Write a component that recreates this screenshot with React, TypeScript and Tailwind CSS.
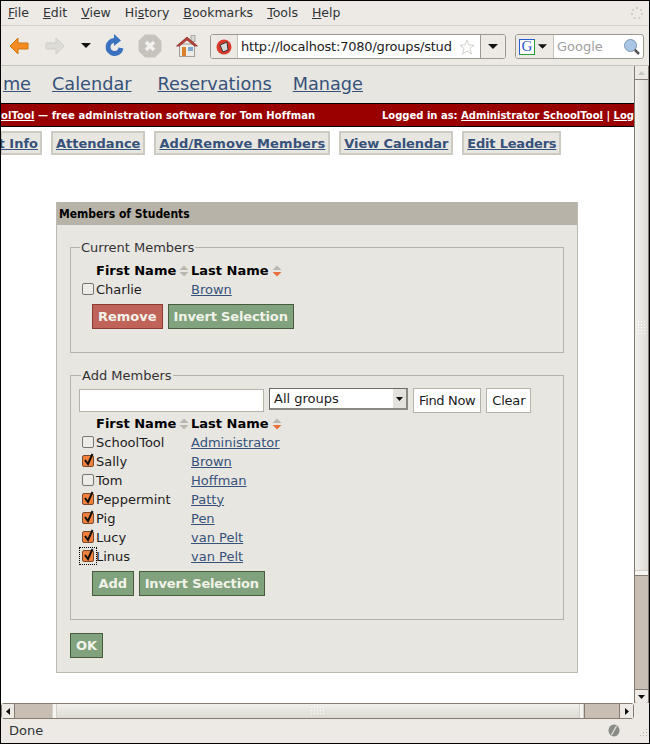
import React from "react";

function Sort({ active }: { active?: boolean }) {
  return (
    <svg width="10" height="12" viewBox="0 0 10 12" className="shrink-0">
      <path d="M5 0.5 L9.5 5 H0.5 Z" fill="#bab8ae" />
      <path d="M0.5 7 H9.5 L5 11.5 Z" fill={active ? "#e8703a" : "#bab8ae"} />
    </svg>
  );
}

function Check({ on, focus }: { on?: boolean; focus?: boolean }) {
  return (
    <span className={`relative block w-[12px] h-[12px] mt-[-1px] shrink-0 rounded-[2px] border ${on ? "border-[#7a4a2a] bg-[#f0803c]" : "border-[#77756e] bg-[#eeece8]"}`}>
      {on && (
        <svg width="13" height="15" viewBox="0 0 13 15" className="absolute left-[-1px] top-[-4px]">
          <path d="M3 8 L6 12 L10.5 2" fill="none" stroke="#111" strokeWidth="2" />
        </svg>
      )}
      {focus && <span className="absolute left-[-4px] top-[-4px] w-[18px] h-[18px] border border-dotted border-black" />}
    </span>
  );
}

function Row({ first, last, on, focus }: { first: string; last: string; on?: boolean; focus?: boolean }) {
  return (
    <div className="flex items-center h-[19px] text-[13px] text-[#1c1c1c]">
      <div className="w-[17px] pl-[3px]"><Check on={on} focus={focus} /></div>
      <div className="w-[95px]">{first}</div>
      <a className="underline text-[#36527a]">{last}</a>
    </div>
  );
}

function Head({ active }: { active?: boolean }) {
  return (
    <div className="flex items-center h-[19px] pl-[17px] text-[13px] font-bold text-black">
      <div className="w-[95px] flex items-center gap-[3px]">First Name <Sort /></div>
      <div className="flex items-center gap-[3px]">Last Name <Sort active={active} /></div>
    </div>
  );
}

function Btn({ children, red, cls }: { children: React.ReactNode; red?: boolean; cls?: string }) {
  return (
    <button className={`h-[25px] border text-[13px] font-bold text-[#f2f2ea] ${cls ?? "px-[5px]"} ${red ? "bg-[#c0645a] border-[#8c3b30]" : "bg-[#80a27c] border-[#465c3c]"}`}>
      {children}
    </button>
  );
}

function Tab({ children, cls }: { children: React.ReactNode; cls: string }) {
  return (
    <div className={`h-[24px] shrink-0 flex items-center pt-[1px] border-2 border-[#cccac1] bg-[#e8e6e1] text-[13px] font-bold text-[#36527a] ${cls}`}>
      <span className="underline">{children}</span>
    </div>
  );
}

function Menu({ u, rest, pre }: { u: string; rest: string; pre?: string }) {
  return <span>{pre}<span className="underline">{u}</span>{rest}</span>;
}

export default function App() {
  return (
    <div className="font-['DejaVu_Sans',sans-serif] w-[650px] h-[744px] overflow-hidden flex flex-col border border-black bg-[#edeae5] text-[#2e2e2e]">
      {/* menu bar */}
      <div className="h-[25px] shrink-0 flex items-center justify-between border-b border-[#d2cfc8] pl-[7px] pr-[5px]">
        <div className="flex gap-[14px] text-[12.5px] text-[#2e3436]">
          <Menu u="F" rest="ile" />
          <Menu u="E" rest="dit" />
          <Menu u="V" rest="iew" />
          <Menu pre="Hi" u="s" rest="tory" />
          <Menu u="B" rest="ookmarks" />
          <Menu u="T" rest="ools" />
          <Menu u="H" rest="elp" />
        </div>
        <svg width="14" height="14" viewBox="0 0 14 14" fill="#c9c6bf">
          <circle cx="7" cy="2" r="1.2" /><circle cx="11" cy="4" r="1" /><circle cx="12" cy="8" r="1" />
          <circle cx="9.5" cy="12" r="1" /><circle cx="4.5" cy="12" r="1" /><circle cx="2" cy="8" r="1" /><circle cx="3" cy="4" r="1" />
        </svg>
      </div>

      {/* toolbar */}
      <div className="h-[40px] shrink-0 flex items-center border-b border-[#c6c3bb] relative">
        <svg width="20" height="18" viewBox="0 0 20 18" className="ml-[8px]">
          <path d="M9 1 L1 9 L9 17 V12 H19 V6 H9 Z" fill="#f58b23" stroke="#d2730f" />
        </svg>
        <svg width="20" height="18" viewBox="0 0 20 18" className="ml-[16px]">
          <path d="M11 1 L19 9 L11 17 V12 H1 V6 H11 Z" fill="#dedcd6" stroke="#cfcdc6" />
        </svg>
        <svg width="10" height="5" viewBox="0 0 10 5" className="ml-[16px]"><path d="M0 0 H10 L5 5 Z" fill="#111" /></svg>
        <svg width="20" height="23" viewBox="0 0 20 23" className="ml-[14px]">
          <path d="M16 14 A6.5 6.5 0 1 1 10 6.5" fill="none" stroke="#3b72c0" strokeWidth="5" />
          <path d="M9 0 L16 6.5 L9 12 Z" fill="#3b72c0" />
        </svg>
        <svg width="24" height="24" viewBox="0 0 24 24" className="ml-[13px]">
          <path d="M7 0.5 H17 L23.5 7 V17 L17 23.5 H7 L0.5 17 V7 Z" fill="#c6c3bd" />
          <path d="M8 8 L16 16 M16 8 L8 16" stroke="#f3f2ef" strokeWidth="3.5" />
        </svg>
        <svg width="22" height="22" viewBox="0 0 22 22" className="ml-[14px]">
          <rect x="15" y="0.5" width="4" height="6" fill="#d8d6d0" stroke="#aaa" />
          <rect x="3.5" y="9" width="15" height="12.5" fill="#eeece6" stroke="#a09e96" />
          <path d="M0.5 11 L11 2 L21.5 11 L18.5 11 L11 5 L3.5 11 Z" fill="#b5413a" stroke="#8e2a25" strokeWidth="0.7" />
          <rect x="6" y="12" width="4" height="9" fill="#d9822b" />
          <rect x="12" y="12" width="5" height="4" fill="#7fa8cf" />
        </svg>
        <div className="absolute left-[209px] top-[8px] w-[296px] h-[25px] flex items-center border border-[#9b988f] rounded-[3px] bg-white overflow-hidden">
          <div className="w-[27px] h-full flex items-center justify-center bg-[#edeae5] border-r border-[#c6c3bb] shrink-0">
            <svg width="16" height="16" viewBox="0 0 16 16">
              <circle cx="8" cy="8" r="7.5" fill="#d93a2b" />
              <path d="M4 6 L11 3 L12 11 L7 13 Z" fill="#d9d9d9" stroke="#333" strokeWidth="1" />
            </svg>
          </div>
          <span className="ml-[3px] text-[13px] tracking-[-0.2px] text-[#1c1c1c] whitespace-nowrap">http://localhost:7080/groups/stud</span>
          <svg width="16" height="16" viewBox="0 0 16 16" className="ml-[7px] shrink-0">
            <path d="M8 1 L10 6 L15 6.3 L11 9.5 L12.5 15 L8 12 L3.5 15 L5 9.5 L1 6.3 L6 6 Z" fill="#fff" stroke="#d2d0ca" />
          </svg>
          <div className="ml-auto w-[25px] h-full shrink-0 flex items-center justify-center bg-[#edeae5] border-l border-[#9b988f]">
            <svg width="10" height="5" viewBox="0 0 10 5"><path d="M0 0 H10 L5 5 Z" fill="#111" /></svg>
          </div>
        </div>
        <div className="absolute left-[514px] top-[8px] w-[129px] h-[25px] flex items-center border border-[#9b988f] rounded-[3px] bg-white overflow-hidden">
          <div className="w-[38px] h-full flex items-center gap-[3px] pl-[3px] bg-[#edeae5] border-r border-[#c6c3bb] shrink-0">
            <span className="w-[16px] h-[16px] flex items-center justify-center bg-white border border-l-[#2a5bd0] border-t-[#2a5bd0] border-r-[#2a9b3c] border-b-[#2a9b3c] font-['Liberation_Serif',serif] text-[15px] leading-none text-[#2a5bd0]">G</span>
            <svg width="9" height="5" viewBox="0 0 10 5"><path d="M0 0 H10 L5 5 Z" fill="#111" /></svg>
          </div>
          <span className="ml-[3px] text-[13px] text-[#a0a0a0]">Google</span>
          <svg width="18" height="18" viewBox="0 0 18 18" className="ml-auto mr-[2px]">
            <path d="M11 11 L16 16" stroke="#555" strokeWidth="2.5" />
            <circle cx="7.5" cy="7.5" r="6" fill="#a9c6e6" stroke="#7d97b2" />
          </svg>
        </div>
      </div>

      {/* page area */}
      <div className="h-[637px] shrink-0 flex">
        <div className="flex-1 min-w-0 overflow-hidden bg-white">
          <div className="h-[37px] bg-[#e8e6e1] flex items-center pl-[4px] text-[17.7px] text-[#36527a]">
            <a className="underline ml-[-5px] w-[31px] text-right">me</a>
            <a className="underline ml-[21px]">Calendar</a>
            <a className="underline ml-[26px]">Reservations</a>
            <a className="underline ml-[21px]">Manage</a>
          </div>
          <div className="h-[24px] border-y border-black bg-[#990000] flex items-center justify-between text-[10px] font-bold text-white whitespace-nowrap overflow-hidden">
            <span className="tracking-[0.08px]"><span className="underline">olTool</span> — free administration software for Tom Hoffman</span>
            <span>Logged in as: <span className="underline">Administrator SchoolTool</span> | <span className="underline">Log</span></span>
          </div>
          <div className="flex gap-[9px] mt-[4px] ml-[-1px] whitespace-nowrap">
            <Tab cls="w-[42px] justify-end pr-[2px]">t Info</Tab>
            <Tab cls="px-[3px]">Attendance</Tab>
            <Tab cls="px-[3px] tracking-[0.1px]">Add/Remove Members</Tab>
            <Tab cls="px-[3px] tracking-[-0.08px]">View Calendar</Tab>
            <Tab cls="px-[3px] tracking-[-0.2px]">Edit Leaders</Tab>
          </div>

          <div className="ml-[55px] mt-[47px] w-[522px] border border-[#bdbab1] bg-[#e8e6e1] pb-[14px]">
            <div className="h-[23px] bg-[#b8b3a8] flex items-center px-[2px] pt-[1px] font-['DejaVu_Sans_Condensed','DejaVu_Sans',sans-serif] text-[12px] font-bold text-black mt-[-1px]">Members of Students</div>
            <div className="px-[13px]">
              <fieldset className="mt-[15px] h-[113px] border border-[#b5b3a9] pl-[8px]">
                <legend className="ml-[1px] px-[1px] text-[13px] leading-[15px] text-[#333]">Current Members</legend>
                <div className="mt-[6px]"><Head active /></div>
                <Row first="Charlie" last="Brown" />
                <div className="flex gap-[5px] mt-[5px] ml-[13px]">
                  <Btn red>Remove</Btn>
                  <Btn cls="px-[5px] tracking-[-0.15px]">Invert Selection</Btn>
                </div>
              </fieldset>
              <fieldset className="mt-[15px] h-[252px] border border-[#b5b3a9] pl-[8px]">
                <legend className="ml-[2px] px-[1px] text-[13px] leading-[15px] text-[#333]">Add Members</legend>
                <div className="flex items-start gap-[5px] mt-[5px]">
                  <input className="w-[185px] h-[23px] bg-white border border-[#b5b3a9] mt-[1px]" />
                  <div className="w-[139px] h-[22px] flex items-center justify-between bg-white border-t border-l border-r-2 border-b-2 border-t-[#6e6c66] border-l-[#6e6c66] border-r-[#8a8880] border-b-[#8a8880] pl-[4px] text-[13px] text-[#1c1c1c]">
                    All groups
                    <div className="w-[13px] h-full bg-[#e4e2dc] flex items-center justify-center">
                      <svg width="7" height="4" viewBox="0 0 7 4"><path d="M0 0 H7 L3.5 4 Z" fill="#111" /></svg>
                    </div>
                  </div>
                  <button className="h-[25px] px-[5px] bg-white border border-[#b5b3a9] text-[13px] tracking-[-0.35px] text-[#1c1c1c]">Find Now</button>
                  <button className="h-[25px] px-[5px] bg-white border border-[#b5b3a9] text-[13px] tracking-[-0.2px] text-[#1c1c1c]">Clear</button>
                </div>
                <div className="mt-[1px]"><Head active /></div>
                <Row first="SchoolTool" last="Administrator" />
                <Row first="Sally" last="Brown" on />
                <Row first="Tom" last="Hoffman" />
                <Row first="Peppermint" last="Patty" on />
                <Row first="Pig" last="Pen" on />
                <Row first="Lucy" last="van Pelt" on />
                <Row first="Linus" last="van Pelt" on focus />
                <div className="flex gap-[5px] mt-[5px] ml-[13px]">
                  <Btn cls="px-[5.5px]">Add</Btn>
                  <Btn cls="px-[5px] tracking-[-0.15px]">Invert Selection</Btn>
                </div>
              </fieldset>
              <div className="mt-[13px]"><Btn>OK</Btn></div>
            </div>
          </div>
        </div>

        {/* vertical scrollbar */}
        <div className="w-[15px] shrink-0 flex flex-col border-x border-[#857b70] bg-[#c8beb3]">
          <div className="h-[14px] bg-[#edeae5] border-b border-[#857b70] flex items-center justify-center">
            <svg width="7" height="4" viewBox="0 0 7 4"><path d="M0 4 H7 L3.5 0 Z" fill="#c9c6bf" /></svg>
          </div>
          <div className="h-[496px] bg-gradient-to-r from-[#f2f0ec] to-[#dedad3] flex flex-col items-center justify-center relative border-b border-[#857b70]">
            <svg width="8" height="14" viewBox="0 0 8 14" fill="#fff">
              {[0, 3, 6].map((x) => [0, 3, 6, 9, 12].map((y) => <rect key={`${x}-${y}`} x={x} y={y} width="1" height="1" />))}
            </svg>
            <div className="absolute bottom-0 left-0 right-0 h-[5px] bg-[#f6f5f2] border-t border-[#d2cfc8]" />
          </div>
          <div className="flex-1" />
          <div className="h-[14px] bg-[#edeae5] border-t border-[#857b70] rounded-b-[3px] flex items-center justify-center">
            <svg width="7" height="4" viewBox="0 0 7 4"><path d="M0 0 H7 L3.5 4 Z" fill="#111" /></svg>
          </div>
        </div>
      </div>

      {/* horizontal scrollbar */}
      <div className="h-[16px] shrink-0 flex">
        <div className="w-[633px] flex border border-[#857b70] bg-[#c8beb3] rounded-[3px]">
          <div className="w-[13px] bg-[#edeae5] border-r border-[#857b70] flex items-center justify-center">
            <svg width="4" height="7" viewBox="0 0 4 7"><path d="M4 0 V7 L0 3.5 Z" fill="#111" /></svg>
          </div>
          <div className="w-[37px]" />
          <div className="w-[5px] bg-[#f6f5f2] border-x border-[#d2cfc8]" />
          <div className="flex-1 bg-gradient-to-b from-[#f2f0ec] to-[#dedad3] flex items-center justify-center">
            <svg width="14" height="8" viewBox="0 0 14 8" fill="#fff">
              {[0, 3, 6].map((y) => [0, 3, 6, 9, 12].map((x) => <rect key={`${x}-${y}`} x={x} y={y} width="1" height="1" />))}
            </svg>
          </div>
          <div className="w-[5px] bg-[#f6f5f2] border-x border-[#d2cfc8]" />
          <div className="w-[35px] border-l border-[#857b70]" />
          <div className="w-[14px] bg-[#edeae5] border-l border-[#857b70] flex items-center justify-center">
            <svg width="4" height="7" viewBox="0 0 4 7"><path d="M0 0 V7 L4 3.5 Z" fill="#111" /></svg>
          </div>
        </div>
      </div>

      {/* status bar */}
      <div className="flex-1 flex items-center justify-between pl-[8px] pr-[1px] pb-[1px] text-[13px] text-[#2e3436]">
        Done
        <div className="flex items-center gap-[18px]">
          <svg width="12" height="13" viewBox="0 0 12 13">
            <ellipse cx="6" cy="6.5" rx="5.5" ry="6" fill="#8a8a86" />
            <path d="M3.5 11 L8.5 2" stroke="#e8e6e1" strokeWidth="1.2" />
          </svg>
          <svg width="10" height="10" viewBox="0 0 10 10" fill="#b5b1a8" className="self-end">
            <rect x="8" y="2" width="1" height="1" /><rect x="5" y="5" width="1" height="1" /><rect x="8" y="5" width="1" height="1" />
            <rect x="2" y="8" width="1" height="1" /><rect x="5" y="8" width="1" height="1" /><rect x="8" y="8" width="1" height="1" />
          </svg>
        </div>
      </div>
    </div>
  );
}
